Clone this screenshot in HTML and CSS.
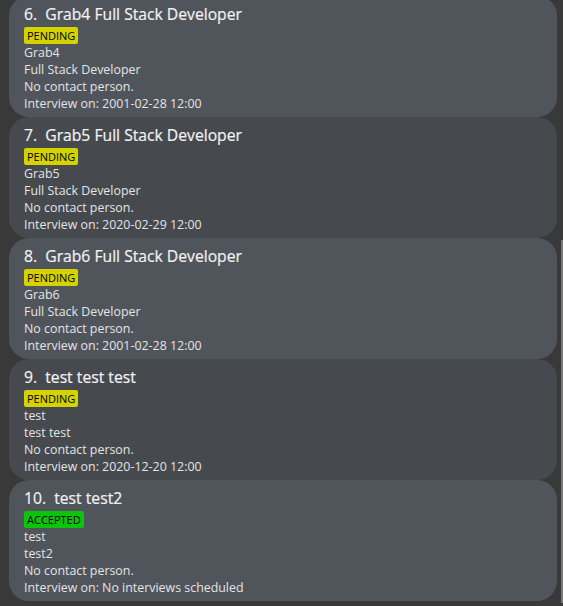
FILE: index.html
```html
<!DOCTYPE html>
<html>
<head>
<meta charset="utf-8">
<link rel="stylesheet" href="styles.css">
</head>
<body>
<div class="view">
  <div class="list">
    <div class="card light">
      <div class="title">6.&nbsp; Grab4 Full Stack Developer</div>
      <div class="badge pending">PENDING</div>
      <div class="line">Grab4</div>
      <div class="line">Full Stack Developer</div>
      <div class="line">No contact person.</div>
      <div class="line">Interview on: 2001-02-28 12:00</div>
    </div>
    <div class="card dark">
      <div class="title">7.&nbsp; Grab5 Full Stack Developer</div>
      <div class="badge pending">PENDING</div>
      <div class="line">Grab5</div>
      <div class="line">Full Stack Developer</div>
      <div class="line">No contact person.</div>
      <div class="line">Interview on: 2020-02-29 12:00</div>
    </div>
    <div class="card light">
      <div class="title">8.&nbsp; Grab6 Full Stack Developer</div>
      <div class="badge pending">PENDING</div>
      <div class="line">Grab6</div>
      <div class="line">Full Stack Developer</div>
      <div class="line">No contact person.</div>
      <div class="line">Interview on: 2001-02-28 12:00</div>
    </div>
    <div class="card dark">
      <div class="title">9.&nbsp; test test test</div>
      <div class="badge pending">PENDING</div>
      <div class="line">test</div>
      <div class="line">test test</div>
      <div class="line">No contact person.</div>
      <div class="line">Interview on: 2020-12-20 12:00</div>
    </div>
    <div class="card light">
      <div class="title">10.&nbsp; test test2</div>
      <div class="badge accepted">ACCEPTED</div>
      <div class="line">test</div>
      <div class="line">test2</div>
      <div class="line">No contact person.</div>
      <div class="line">Interview on: No interviews scheduled</div>
    </div>
  </div>
  <div class="scrollbar"><div class="thumb"></div></div>
</div>
</body>
</html>
```
FILE: styles.css
```css
html, body {
  margin: 0;
  padding: 0;
  background: #393939;
  overflow: hidden;
  height: 606px;
}
.view {
  display: flex;
  width: 563px;
  height: 606px;
}
.list {
  width: 561px;
  flex: none;
  display: flex;
  flex-direction: column;
  margin-top: -4px;
  padding-left: 9px;
  box-sizing: border-box;
}
.card {
  width: 548px;
  height: 121px;
  box-sizing: border-box;
  border-radius: 20px;
  padding: 6px 15px 5px 15px;
  font-family: "Open Sans", "Noto Sans", sans-serif;
  color: #e4e4e4;
  display: flex;
  flex-direction: column;
  align-items: flex-start;
}
.card.light { background: #50555c; }
.card.dark { background: #464a4e; }
.title {
  font-size: 15.7px;
  line-height: 24px;
  color: #f2f2f2;
  white-space: nowrap;
  -webkit-text-stroke: 0.2px #f2f2f2;
}
.badge {
  margin-top: 1px;
  height: 17px;
  line-height: 17px;
  padding: 0 3px;
  border-radius: 2px;
  font-size: 11px;
  color: #000;
}
.badge.pending { background: #d4d200; }
.badge.accepted { background: #0cc40c; }
.line {
  font-size: 12.4px;
  line-height: 17px;
  white-space: nowrap;
}
.scrollbar {
  flex: none;
  width: 2px;
  display: flex;
  flex-direction: column;
  padding-top: 240px;
  padding-bottom: 3px;
  box-sizing: border-box;
}
.thumb {
  flex: 1;
  background: #7a7a7a;
}
```
